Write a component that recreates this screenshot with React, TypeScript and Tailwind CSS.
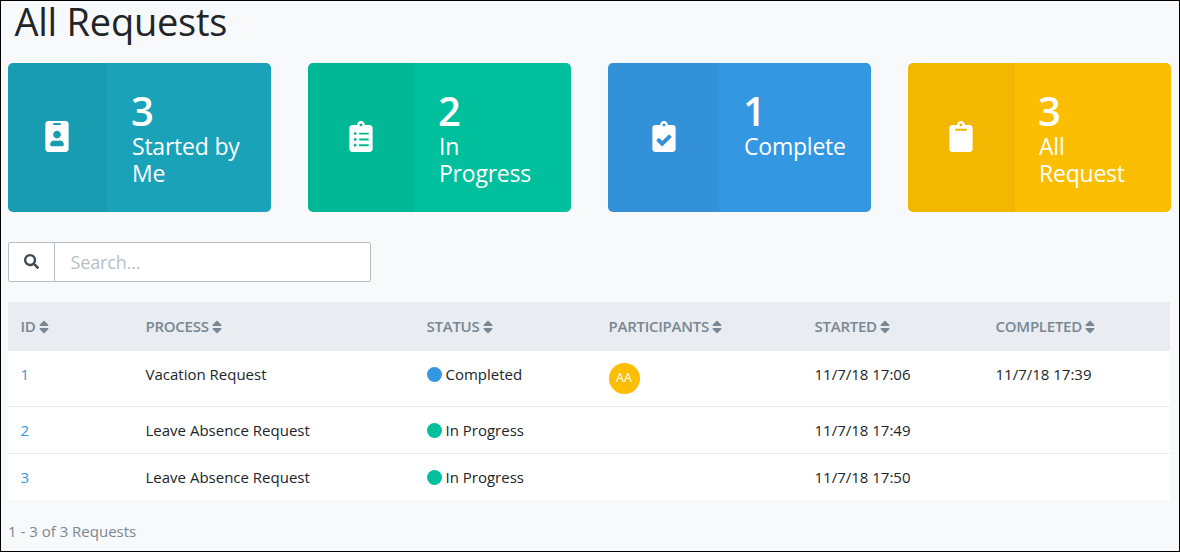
import type { ReactNode } from "react";
import { FaClipboard, FaClipboardCheck, FaClipboardList, FaIdBadge, FaSearch, FaSort } from "react-icons/fa";

type CardProps = { color: string; side: string; pad: string; icon: ReactNode; count: number; label: ReactNode };

function Card({ color, side, pad, icon, count, label }: CardProps) {
  return (
    <div className={`flex h-[149px] w-[263px] overflow-hidden rounded-[5px] text-white ${color}`}>
      <div className={`flex items-center justify-center bg-black/[0.035] pb-0.5 ${side}`}>{icon}</div>
      <div className={`pt-[27px] ${pad}`}>
        <div className="-ml-px h-[43px] text-[40px] leading-[42px] font-semibold">{count}</div>
        <div className="text-[23px] leading-[27px] tracking-[-0.22px]">{label}</div>
      </div>
    </div>
  );
}

const iconSize = "h-[31px] w-[24px]";

const columns = "grid grid-cols-[125px_281px_182px_206px_181px_1fr] pl-[12.5px]";
const headings = ["ID", "PROCESS", "STATUS", "PARTICIPANTS", "STARTED", "COMPLETED"];

const rows = [
  { id: 1, process: "Vacation Request", status: "Completed", user: "AA", started: "11/7/18 17:06", completed: "11/7/18 17:39" },
  { id: 2, process: "Leave Absence Request", status: "In Progress", user: "", started: "11/7/18 17:49", completed: "" },
  { id: 3, process: "Leave Absence Request", status: "In Progress", user: "", started: "11/7/18 17:50", completed: "" },
];

export default function App() {
  return (
    <div className="h-[552px] w-[1180px] overflow-hidden border border-black bg-[#f8f9fb] pr-2 pl-[7px] font-['Open_Sans',sans-serif] text-[#212529]">
      <h1 className="h-[62px] pl-[6.5px] text-[38px] leading-[41px] tracking-[-0.25px]">All Requests</h1>
      <div className="flex gap-[37px]">
        <Card color="bg-[#19a2b8]" side="w-[99px] pr-px" pad="pl-[25px]" icon={<FaIdBadge className={iconSize} />} count={3} label={<>Started by<br />Me</>} />
        <Card color="bg-[#00bf9c]" side="w-[106px]" pad="pl-[25px]" icon={<FaClipboardList className={iconSize} />} count={2} label={<>In<br />Progress</>} />
        <Card color="bg-[#3497e1]" side="w-[111px]" pad="pl-[25px]" icon={<FaClipboardCheck className={iconSize} />} count={1} label="Complete" />
        <Card color="bg-[#fbbe02]" side="w-[107px] pr-px" pad="pl-[24px]" icon={<FaClipboard className={iconSize} />} count={3} label={<>All<br />Request</>} />
      </div>
      <div className="mt-[30px] flex h-10 w-[363px] rounded-[2px] border border-[#b6bfc6] bg-white">
        <div className="flex w-[46px] items-center justify-center border-r border-[#b6bfc6] pb-0.5">
          <FaSearch className="h-[15px] w-[15px] text-[#3f4a54]" />
        </div>
        <div className="flex-1 pl-[15.5px] text-[18px] leading-[39px] tracking-[-0.15px] text-[#b6bfc6]">Search...</div>
      </div>
      <div className="mt-5 w-[1162px]">
        <div className={`${columns} h-[49px] items-center bg-[#e9ecf1] text-[15px] font-semibold text-[#788793]`}>
          {headings.map((h) => (
            <div key={h} className="flex items-center gap-[3px]">
              <span className="tracking-[-0.25px]">{h}</span>
              <FaSort className="h-[16px] w-[10px]" />
            </div>
          ))}
        </div>
        {rows.map((r, i) => (
          <div
            key={r.id}
            className={`${columns} bg-white pt-[11px] text-[15px] leading-6 ${i === 0 ? "h-14 border-b border-[#e9ecf1]" : i === 1 ? "h-[47px] border-b border-[#e9ecf1]" : "h-[46px]"}`}
          >
            <div className="text-[#3497e1]">{r.id}</div>
            <div>{r.process}</div>
            <div className="flex h-6 items-center gap-1">
              <span className={`size-[15px] rounded-full ${r.status === "Completed" ? "bg-[#3497e1]" : "bg-[#00bf9c]"}`} />
              {r.status}
            </div>
            <div>
              {r.user && (
                <div className="mt-px flex size-[31px] items-center justify-center rounded-full bg-[#fbbe02] pb-0.5 text-[12.5px] text-white">{r.user}</div>
              )}
            </div>
            <div>{r.started}</div>
            <div>{r.completed}</div>
          </div>
        ))}
      </div>
      <div className="mt-[19px] text-[15px] leading-6 text-[#788793]">1 - 3 of 3 Requests</div>
    </div>
  );
}
